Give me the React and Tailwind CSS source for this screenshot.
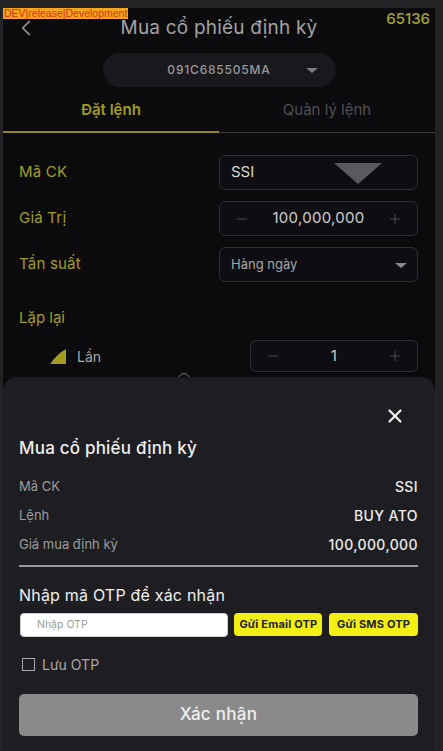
import { Minus, Plus, X, ChevronLeft } from "lucide-react";

const font = { fontFamily: "Inter, 'Noto Sans', sans-serif" };

// Ô nhập có nút - / +
const Stepper = ({ value, className }) => (
  <div
    className={`flex items-center justify-between h-full rounded-[6px] border border-[#2e2e33] bg-[#0e0e12] px-[14px] ${className}`}
  >
    <Minus size={16} strokeWidth={1.5} className="text-[#4a4a4f]" />
    <span className="text-[15px] text-[#cfcfcf] tracking-[0.3px]">{value}</span>
    <Plus size={16} strokeWidth={1.5} className="text-[#4a4a4f]" />
  </div>
);

const FormRow = ({ label, children, className = "" }) => (
  <div className={`flex items-center justify-between ${className}`}>
    <span className="text-[15px] text-[#a39e22] tracking-[0.2px]">{label}</span>
    <div className="w-[199px] h-full">{children}</div>
  </div>
);

const InfoRow = ({ label, value }) => (
  <div className="flex items-center justify-between h-[29px]">
    <span className="text-[13px] text-[#9c9c9c]">{label}</span>
    <span className="text-[14px] font-medium text-[#ececec] tracking-[0.4px]">{value}</span>
  </div>
);

export default function App() {
  return (
    <div
      style={font}
      className="relative w-[443px] h-[751px] overflow-hidden bg-[#232326] pt-[8px] pl-[3px] pr-[8px]"
    >
      {/* Nhãn môi trường */}
      <div className="absolute left-[3px] top-[8px] h-[11px] px-[1px] bg-[#f7a61c] text-[10.5px] leading-[11px] text-[#d2321a] font-['Liberation_Sans',sans-serif]">
        DEV|release|Development
      </div>
      <div className="absolute right-[13px] top-[8px] text-[15px] text-[#a6a22a] font-medium">65136</div>

      <div className="h-full bg-[#0b0b0e]">
        {/* Header */}
        <div className="relative flex items-center justify-center h-[40px]">
          <ChevronLeft size={26} strokeWidth={1.6} className="absolute left-[10px] text-[#9a9a9a]" />
          <span className="text-[19px] text-[#a3a3a3] tracking-[0.2px]">Mua cổ phiếu định kỳ</span>
        </div>

        {/* Tài khoản */}
        <div className="relative mx-auto mt-[5px] w-[233px] h-[34px] rounded-full bg-[#19191d] flex items-center justify-center">
          <span className="text-[12px] text-[#9a9a9a] tracking-[0.8px] font-medium">091C685505MA</span>
          <div className="absolute right-[18px] top-[15px] w-0 h-0 border-l-[6px] border-r-[6px] border-t-[5px] border-l-transparent border-r-transparent border-t-[#7a7a7a]" />
        </div>

        {/* Tabs */}
        <div className="flex h-[44px] pt-[3px]">
          <div className="flex-1 flex items-center justify-center text-[15px] font-semibold text-[#a19c1d]">Đặt lệnh</div>
          <div className="flex-1 flex items-center justify-center text-[15px] text-[#4f4f52]">Quản lý lệnh</div>
        </div>
        <div className="flex h-[2px]">
          <div className="w-[216px] bg-[#8f8a1c]" />
          <div className="flex-1 mt-[1px] h-[1px] bg-[#3a3a3d]" />
        </div>

        {/* Form */}
        <div className="pl-[16px] pr-[17px] pt-[22px]">
          <FormRow label="Mã CK" className="h-[35px]">
            <div className="relative flex items-center h-full rounded-[6px] border border-[#2e2e33] bg-[#0e0e12] pl-[11px]">
              <span className="text-[15px] text-[#d8d8d8]">SSI</span>
              <div className="absolute left-[114px] top-[7px] w-0 h-0 border-l-[24px] border-r-[24px] border-t-[21px] border-l-transparent border-r-transparent border-t-[#5a5a5e]" />
            </div>
          </FormRow>
          <FormRow label="Giá Trị" className="h-[35px] mt-[11px]">
            <Stepper value="100,000,000" />
          </FormRow>
          <FormRow label="Tần suất" className="h-[35px] mt-[11px]">
            <div className="relative flex items-center h-full rounded-[6px] border border-[#2e2e33] bg-[#0e0e12] pl-[11px]">
              <span className="text-[13px] text-[#a8a8a8]">Hàng ngày</span>
              <div className="absolute right-[10px] top-[15px] w-0 h-0 border-l-[6px] border-r-[6px] border-t-[5px] border-l-transparent border-r-transparent border-t-[#8a8a8a]" />
            </div>
          </FormRow>
          <div className="mt-[24px] h-[24px] flex items-center text-[15px] text-[#a39e22]">Lặp lại</div>
          <div className="mt-[10px] h-[32px] flex items-center justify-between">
            <div className="flex items-center pl-[31px] gap-[11px]">
              <svg width="16" height="16" viewBox="0 0 16 16">
                <path d="M0 16 L16 16 L16 1 Q7 6 0 16 Z" fill="#a39e22" />
              </svg>
              <span className="text-[14px] text-[#a8a8a8]">Lần</span>
            </div>
            <Stepper value="1" className="w-[168px]" />
          </div>
          <div className="ml-[159px] mt-[1px] w-[12px] h-[12px] rounded-full border border-[#777]" />
        </div>
      </div>

      {/* Bottom sheet xác nhận */}
      <div className="absolute left-[3px] right-[8px] top-[377px] bottom-0 rounded-t-[14px] bg-[#1e1e22] pl-[16px] pr-[17px] pt-[27px]">
        <div className="flex justify-end h-[24px] items-center pr-[12px]">
          <X size={22} strokeWidth={2.4} className="text-[#f2f2f2]" />
        </div>
        <div className="mt-[8px] h-[26px] flex items-center text-[17px] font-medium text-[#eeeeee] tracking-[0.2px]">
          Mua cổ phiếu định kỳ
        </div>
        <div className="mt-[10px]">
          <InfoRow label="Mã CK" value="SSI" />
          <InfoRow label="Lệnh" value="BUY ATO" />
          <InfoRow label="Giá mua định kỳ" value="100,000,000" />
        </div>
        <div className="mt-[6px] h-[1.5px] bg-[#9a9a9a]" />

        <div className="mt-[17px] h-[22px] flex items-center text-[16px] text-[#f0f0f0] tracking-[0.2px]">
          Nhập mã OTP để xác nhận
        </div>
        <div className="mt-[7px] h-[24px] flex items-center">
          <div className="w-[209px] h-full rounded-[4px] bg-white border border-[#cfcfcf] flex items-center pl-[16px] ml-[1px]">
            <span className="text-[10.5px] text-[#9a9a9a]">Nhập OTP</span>
          </div>
          <button className="ml-[6px] w-[88px] h-[23px] rounded-[4px] bg-[#f4ef12] text-[11px] font-bold text-[#222] tracking-[0.2px]">
            Gửi Email OTP
          </button>
          <button className="ml-[7px] w-[89px] h-[23px] rounded-[4px] bg-[#f4ef12] text-[11px] font-bold text-[#222] tracking-[0.2px]">
            Gửi SMS OTP
          </button>
        </div>

        <div className="mt-[18px] h-[20px] flex items-center pl-[3px] gap-[7px]">
          <div className="w-[13px] h-[13px] border-[1.5px] border-[#a8a8a8]" />
          <span className="text-[14px] text-[#a8a8a8]">Lưu OTP</span>
        </div>

        <button className="mt-[19px] w-full h-[42px] rounded-[5px] bg-[#8a8a8a] text-[17px] font-medium text-[#f0f0f0] tracking-[0.3px]">
          Xác nhận
        </button>
      </div>
    </div>
  );
}
